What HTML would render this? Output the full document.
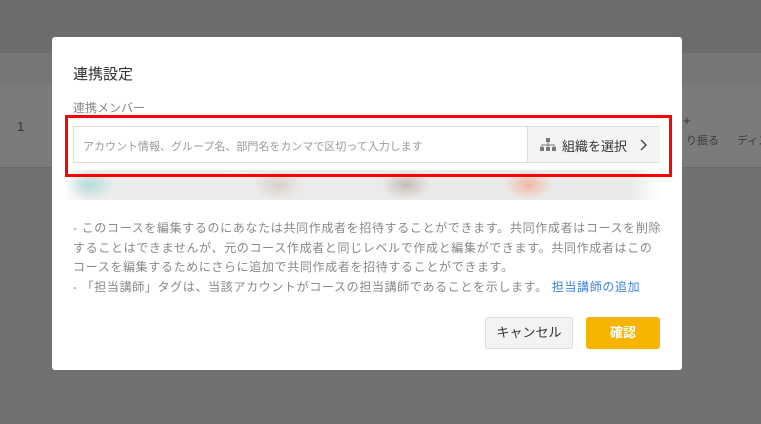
<!DOCTYPE html>
<html><head><meta charset="utf-8"><style>
*{margin:0;padding:0;box-sizing:border-box}
body{width:761px;height:424px;overflow:hidden;position:relative;background:#717171;font-family:"Liberation Sans","Noto Sans CJK JP",sans-serif}
.b{position:absolute;left:0;width:761px}
.t{position:absolute;color:#3a3a3a;font-size:11px;white-space:nowrap}
.modal{position:absolute;left:52px;top:37px;width:630px;height:333px;background:#fff;border-radius:3px}
</style></head><body>
<div class="b" style="top:0;height:53px;background:#6c6c6c"></div>
<div class="b" style="top:53px;height:32px;background:#767676"></div>
<div class="b" style="top:85px;height:83px;background:#7b7b7b;border-bottom:1px solid #6a6a6a"></div>
<div class="t" style="left:17px;top:119px;font-size:13px;color:#333">1</div>
<div class="t" style="left:683px;top:113px;font-size:13px;color:#333">+</div>
<div class="t" style="left:686px;top:132px;color:#3c3c3c">り振る</div>
<div class="t" style="left:737px;top:132px;color:#3c3c3c">ディス</div>
<div class="modal">
<div style="position:absolute;left:21px;top:26px;font-size:15px;color:#333">連携設定</div>
<div style="position:absolute;left:21px;top:62px;font-size:12px;color:#888">連携メンバー</div>
<div style="position:absolute;left:11px;top:133px;width:597px;height:30px;background:linear-gradient(90deg,rgba(255,255,255,0) 0,#ececec 4%,#eaeaea 95%,#fff 100%)">
<div style="position:absolute;left:2px;top:0;width:50px;height:30px;background:radial-gradient(ellipse at center,#b6dcdc,rgba(236,236,236,0) 70%)"></div>
<div style="position:absolute;left:190px;top:0;width:50px;height:30px;background:radial-gradient(ellipse at center,#d9cfc9,rgba(236,236,236,0) 70%)"></div>
<div style="position:absolute;left:318px;top:0;width:50px;height:30px;background:radial-gradient(ellipse at center,#c9bdb5,rgba(236,236,236,0) 70%)"></div>
<div style="position:absolute;left:440px;top:0;width:50px;height:30px;background:radial-gradient(ellipse at center,#f2b7a6,rgba(236,236,236,0) 70%)"></div>
</div>
<div style="position:absolute;left:13px;top:78px;width:607px;height:62px;border:3px solid #f00"></div>
<div style="position:absolute;left:21px;top:89px;width:587px;height:37px;border:1px solid #dcdcdc;background:#fff">
<div style="position:absolute;left:9px;top:11px;font-size:11px;color:#9a9a9a;white-space:nowrap">アカウント情報、グループ名、部門名をカンマで区切って入力します</div>
<div style="position:absolute;left:453px;top:0;width:133px;height:35px;background:#f4f4f4;border-left:1px solid #dcdcdc">
<svg style="position:absolute;left:12px;top:10px" width="16" height="15" viewBox="0 0 16 15"><rect x="6" y="1" width="4" height="4" fill="#777"/><path d="M8 5v3M2 10V8h12v2M8 8v2" stroke="#777" fill="none"/><rect x="0" y="10" width="4" height="4" fill="#777"/><rect x="6" y="10" width="4" height="4" fill="#777"/><rect x="12" y="10" width="4" height="4" fill="#777"/></svg>
<div style="position:absolute;left:34px;top:9px;font-size:13px;color:#333;white-space:nowrap">組織を選択</div>
<svg style="position:absolute;left:112px;top:12px" width="7" height="12"><path d="M1 1l5 5-5 5" stroke="#444" stroke-width="1.4" fill="none"/></svg>
</div></div>
<div style="position:absolute;left:21px;top:182px;width:594px;font-size:12px;letter-spacing:0.65px;line-height:19.5px;color:#888">- このコースを編集するのにあなたは共同作成者を招待することができます。共同作成者はコースを削除することはできませんが、元のコース作成者と同じレベルで作成と編集ができます。共同作成者はこの<br>コースを編集するためにさらに追加で共同作成者を招待することができます。<br>- 「担当講師」タグは、当該アカウントがコースの担当講師であることを示します。 <span style="color:#3b82e0">担当講師の追加</span></div>
<div style="position:absolute;left:433px;top:280px;width:88px;height:32px;background:#f3f3f3;border:1px solid #ddd;border-radius:3px;font-size:13px;color:#333;text-align:center;line-height:30px">キャンセル</div>
<div style="position:absolute;left:534px;top:280px;width:74px;height:32px;background:#f4b400;border-radius:3px;font-size:13px;color:#fff;text-align:center;line-height:32px;font-weight:bold">確認</div>
</div>
</body></html>
